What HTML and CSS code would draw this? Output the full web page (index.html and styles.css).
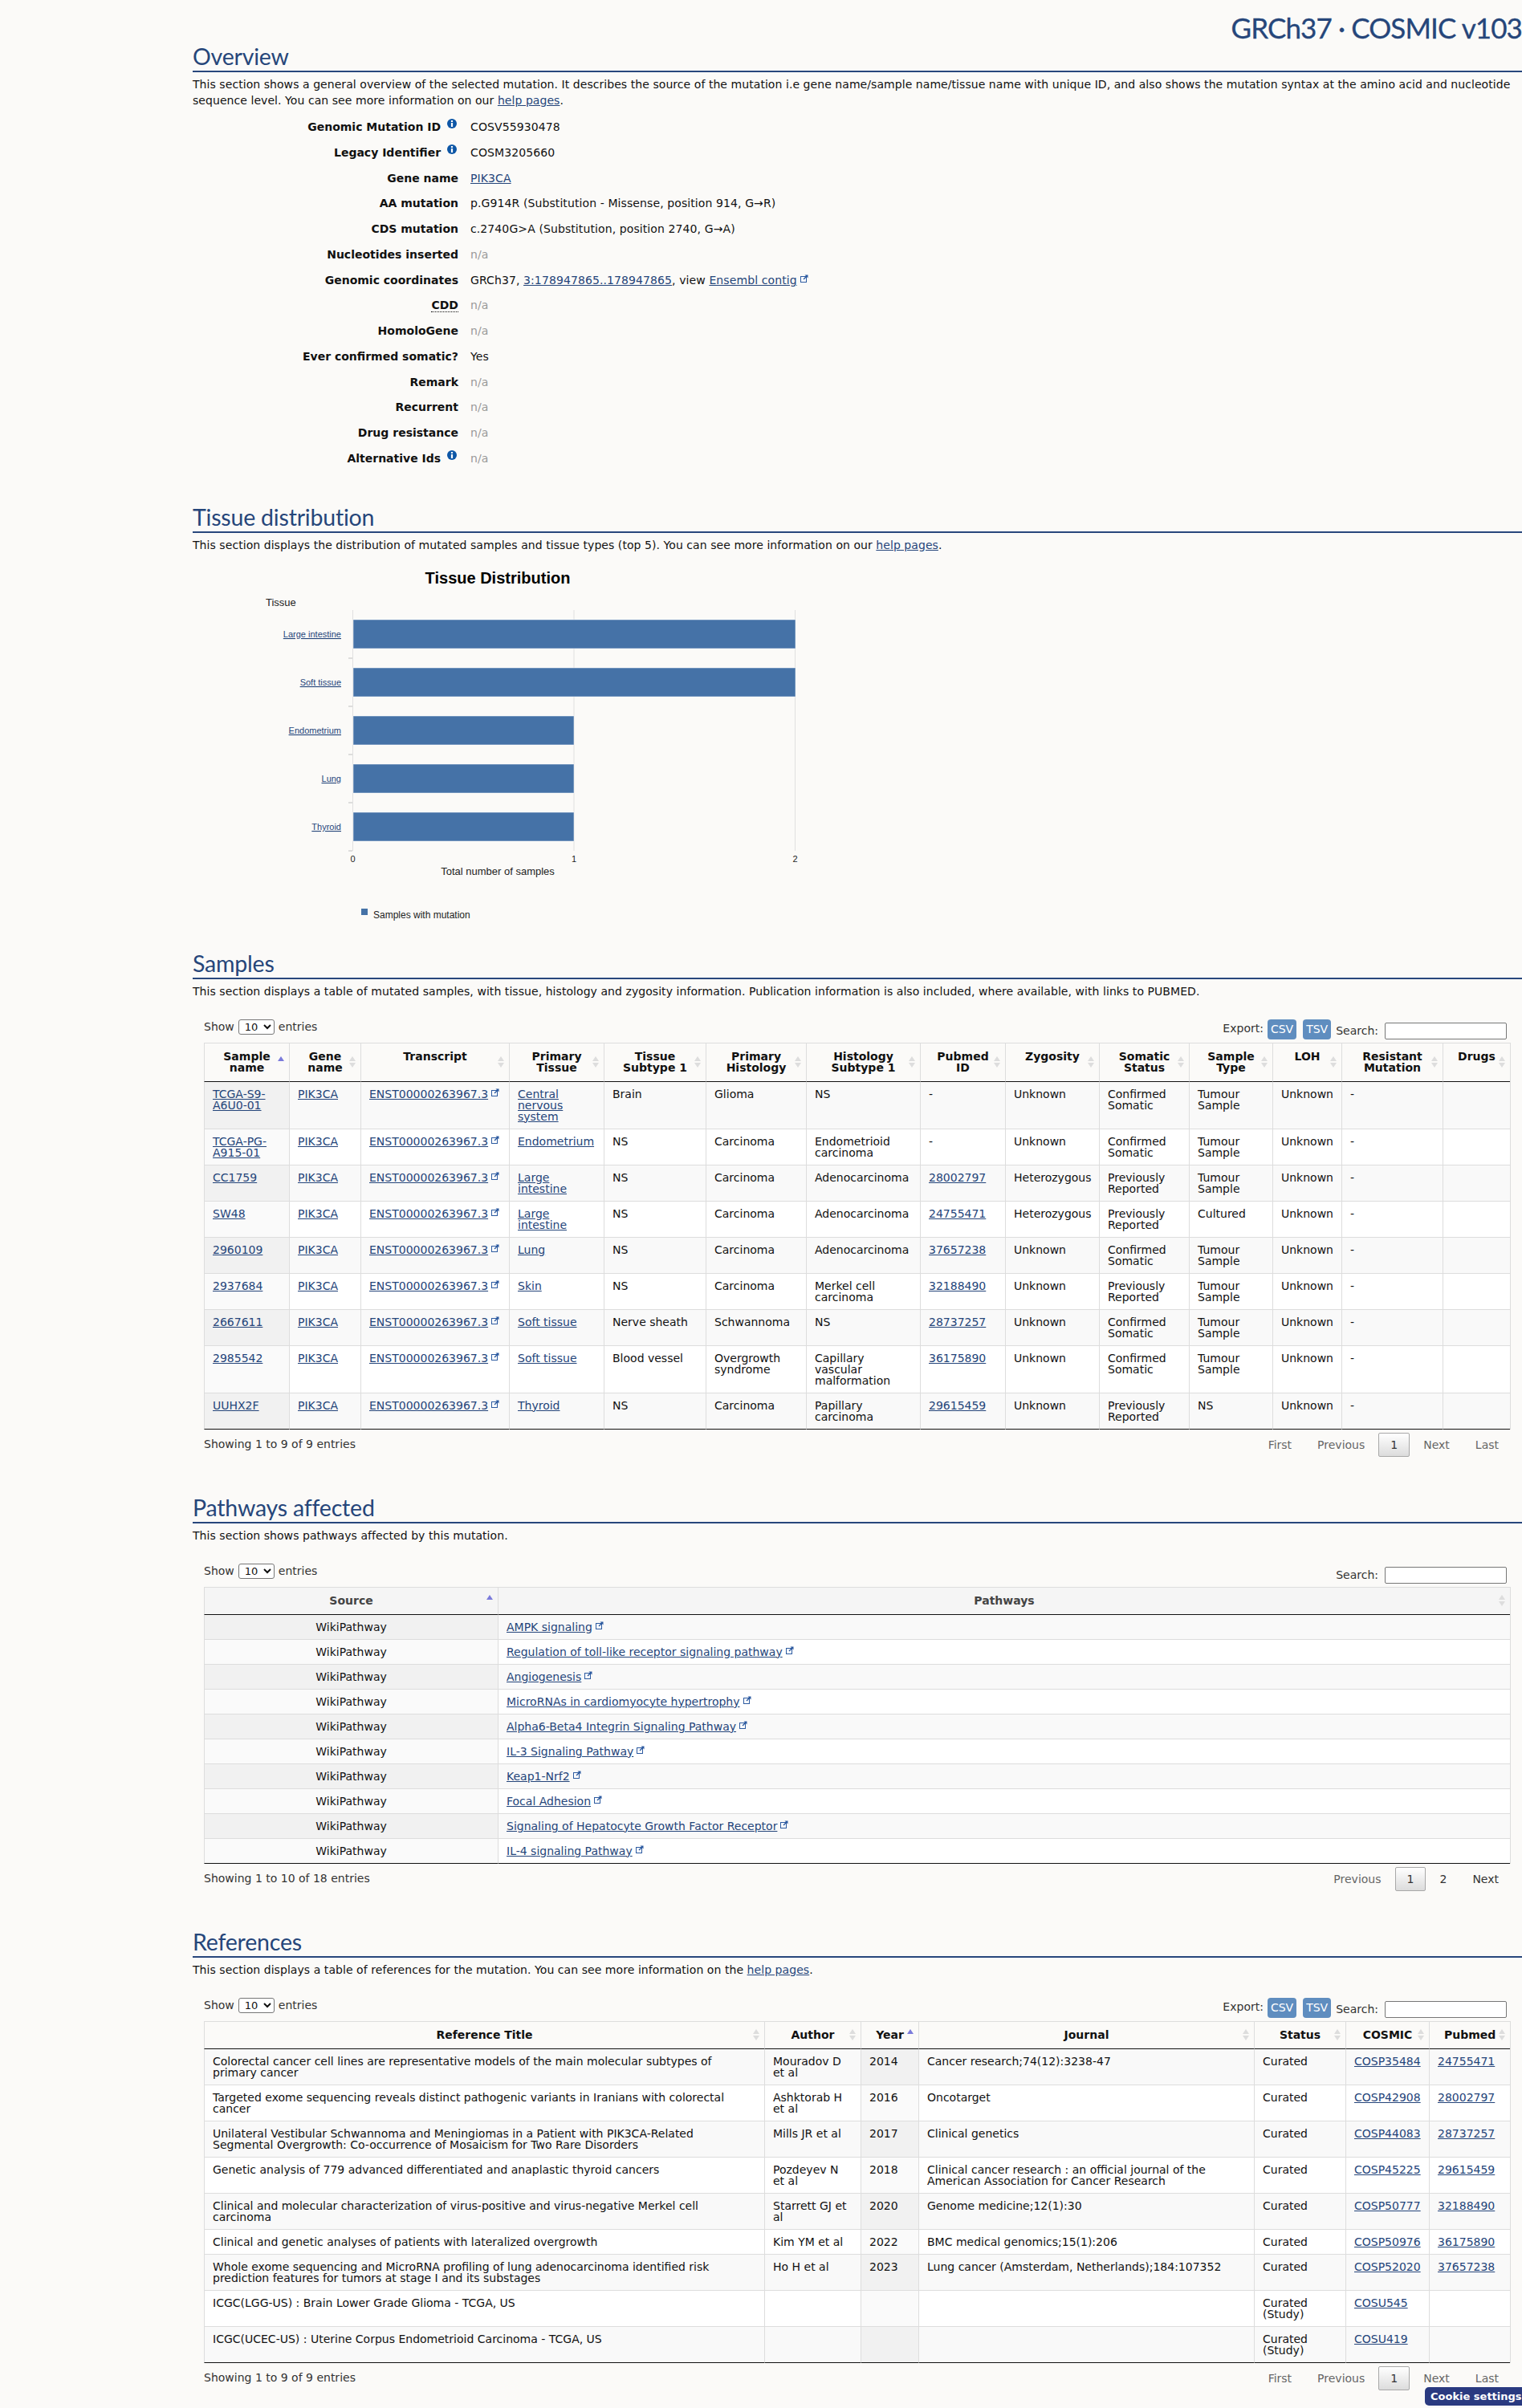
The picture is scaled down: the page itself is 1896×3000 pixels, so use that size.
FILE: index.html
```html
<!DOCTYPE html>
<html lang="en">
<head>
<meta charset="utf-8">
<title>GRCh37 · COSMIC v103</title>
<link rel="stylesheet" href="styles.css">
</head>
<body>
<svg class="defs" width="0" height="0" aria-hidden="true">
  <symbol id="ext" viewBox="0 0 10 10">
    <rect x="0.5" y="2.5" width="7" height="7" fill="#fff" stroke="#2c5aa0" stroke-width="1"/>
    <path d="M4 6 L8.2 1.8" stroke="#2c5aa0" stroke-width="1.4" fill="none"/>
    <path d="M5.5 0.5 H9.5 V4.5 Z" fill="#2c5aa0"/>
  </symbol>
  <symbol id="info" viewBox="0 0 12 12">
    <circle cx="6" cy="6" r="6" fill="#0d56a6"/>
    <rect x="4.9" y="2" width="2.2" height="2" fill="#fff"/>
    <rect x="4.9" y="5" width="2.2" height="5" fill="#fff"/>
  </symbol>
</svg>
<main class="page">
  <div class="release">GRCh37 · COSMIC v103</div>

  <section>
    <h2>Overview</h2>
    <p class="intro">This section shows a general overview of the selected mutation. It describes the source of the mutation i.e gene name/sample name/tissue name with unique ID, and also shows the mutation syntax at the amino acid and nucleotide sequence level. You can see more information on our <a href="#">help pages</a>.</p>
    <dl class="facts">
      <dt>Genomic Mutation ID <svg class="i"><use href="#info"/></svg></dt><dd>COSV55930478</dd>
      <dt>Legacy Identifier <svg class="i"><use href="#info"/></svg></dt><dd>COSM3205660</dd>
      <dt>Gene name</dt><dd><a href="#">PIK3CA</a></dd>
      <dt>AA mutation</dt><dd>p.G914R (Substitution - Missense, position 914, G→R)</dd>
      <dt>CDS mutation</dt><dd>c.2740G&gt;A (Substitution, position 2740, G→A)</dd>
      <dt>Nucleotides inserted</dt><dd class="na">n/a</dd>
      <dt>Genomic coordinates</dt><dd>GRCh37, <a href="#">3:178947865..178947865</a>, view <a href="#">Ensembl contig</a><svg class="x"><use href="#ext"/></svg></dd>
      <dt><abbr>CDD</abbr></dt><dd class="na">n/a</dd>
      <dt>HomoloGene</dt><dd class="na">n/a</dd>
      <dt>Ever confirmed somatic?</dt><dd>Yes</dd>
      <dt>Remark</dt><dd class="na">n/a</dd>
      <dt>Recurrent</dt><dd class="na">n/a</dd>
      <dt>Drug resistance</dt><dd class="na">n/a</dd>
      <dt>Alternative Ids <svg class="i"><use href="#info"/></svg></dt><dd class="na">n/a</dd>
    </dl>
  </section>

  <section>
    <h2>Tissue distribution</h2>
    <p class="intro">This section displays the distribution of mutated samples and tissue types (top 5). You can see more information on our <a href="#">help pages</a>.</p>
    <svg class="chart" viewBox="240 689 800 493" width="800" height="493">
      <g class="grid">
        <path d="M439.5 760V1060M715 760V1060M990.5 760V1060"/>
        <path d="M434 820H439M434 880H439M434 940H439M434 1000H439M434 1060H439"/>
      </g>
      <g class="bars">
        <rect x="440" y="772" width="551" height="36"/>
        <rect x="440" y="832" width="551" height="36"/>
        <rect x="440" y="892" width="275" height="36"/>
        <rect x="440" y="952" width="275" height="36"/>
        <rect x="440" y="1012" width="275" height="36"/>
      </g>
      <text class="c-title" x="620" y="727">Tissue Distribution</text>
      <text class="c-label" x="331" y="755">Tissue</text>
      <g class="c-links">
        <text x="425" y="794">Large intestine</text>
        <text x="425" y="854">Soft tissue</text>
        <text x="425" y="914">Endometrium</text>
        <text x="425" y="974">Lung</text>
        <text x="425" y="1034">Thyroid</text>
      </g>
      <g class="c-tick">
        <text x="439.5" y="1074">0</text>
        <text x="715" y="1074">1</text>
        <text x="990.5" y="1074">2</text>
      </g>
      <text class="c-axis" x="620" y="1090">Total number of samples</text>
      <rect class="c-key" x="450" y="1132" width="8" height="8"/>
      <text class="c-text" x="465" y="1144">Samples with mutation</text>
    </svg>
  </section>

  <section>
    <h2>Samples</h2>
    <p class="intro">This section displays a table of mutated samples, with tissue, histology and zygosity information. Publication information is also included, where available, with links to PUBMED.</p>
    <div class="dt">
      <div class="bar">
        <label class="len">Show <select><option>10</option></select> entries</label>
        <div class="tools">
          <span class="exp">Export:</span><a class="btn">CSV</a><a class="btn">TSV</a>
          <label class="find">Search: <input type="text"></label>
        </div>
      </div>
      <table class="grid-table samples">
        <colgroup>
          <col class="s1"><col class="s2"><col class="s3"><col class="s4"><col class="s5"><col class="s6"><col class="s7"><col class="s8"><col class="s9"><col class="s10"><col class="s11"><col class="s12"><col class="s13"><col class="s14">
        </colgroup>
        <thead>
          <tr>
            <th class="asc">Sample<br>name</th><th>Gene<br>name</th><th>Transcript</th><th>Primary<br>Tissue</th><th>Tissue<br>Subtype 1</th><th>Primary<br>Histology</th><th>Histology<br>Subtype 1</th><th>Pubmed<br>ID</th><th>Zygosity</th><th>Somatic<br>Status</th><th>Sample<br>Type</th><th>LOH</th><th>Resistant<br>Mutation</th><th>Drugs</th>
          </tr>
        </thead>
        <tbody>
          <tr><td class="key"><a href="#">TCGA-S9-A6U0-01</a></td><td><a href="#">PIK3CA</a></td><td class="nw"><a href="#">ENST00000263967.3</a><svg class="x"><use href="#ext"/></svg></td><td><a href="#">Central nervous system</a></td><td>Brain</td><td>Glioma</td><td>NS</td><td>-</td><td>Unknown</td><td>Confirmed Somatic</td><td>Tumour Sample</td><td>Unknown</td><td>-</td><td></td></tr>
          <tr><td class="key"><a href="#">TCGA-PG-A915-01</a></td><td><a href="#">PIK3CA</a></td><td class="nw"><a href="#">ENST00000263967.3</a><svg class="x"><use href="#ext"/></svg></td><td><a href="#">Endometrium</a></td><td>NS</td><td>Carcinoma</td><td>Endometrioid carcinoma</td><td>-</td><td>Unknown</td><td>Confirmed Somatic</td><td>Tumour Sample</td><td>Unknown</td><td>-</td><td></td></tr>
          <tr><td class="key"><a href="#">CC1759</a></td><td><a href="#">PIK3CA</a></td><td class="nw"><a href="#">ENST00000263967.3</a><svg class="x"><use href="#ext"/></svg></td><td><a href="#">Large intestine</a></td><td>NS</td><td>Carcinoma</td><td>Adenocarcinoma</td><td><a href="#">28002797</a></td><td>Heterozygous</td><td>Previously Reported</td><td>Tumour Sample</td><td>Unknown</td><td>-</td><td></td></tr>
          <tr><td class="key"><a href="#">SW48</a></td><td><a href="#">PIK3CA</a></td><td class="nw"><a href="#">ENST00000263967.3</a><svg class="x"><use href="#ext"/></svg></td><td><a href="#">Large intestine</a></td><td>NS</td><td>Carcinoma</td><td>Adenocarcinoma</td><td><a href="#">24755471</a></td><td>Heterozygous</td><td>Previously Reported</td><td>Cultured</td><td>Unknown</td><td>-</td><td></td></tr>
          <tr><td class="key"><a href="#">2960109</a></td><td><a href="#">PIK3CA</a></td><td class="nw"><a href="#">ENST00000263967.3</a><svg class="x"><use href="#ext"/></svg></td><td><a href="#">Lung</a></td><td>NS</td><td>Carcinoma</td><td>Adenocarcinoma</td><td><a href="#">37657238</a></td><td>Unknown</td><td>Confirmed Somatic</td><td>Tumour Sample</td><td>Unknown</td><td>-</td><td></td></tr>
          <tr><td class="key"><a href="#">2937684</a></td><td><a href="#">PIK3CA</a></td><td class="nw"><a href="#">ENST00000263967.3</a><svg class="x"><use href="#ext"/></svg></td><td><a href="#">Skin</a></td><td>NS</td><td>Carcinoma</td><td>Merkel cell carcinoma</td><td><a href="#">32188490</a></td><td>Unknown</td><td>Previously Reported</td><td>Tumour Sample</td><td>Unknown</td><td>-</td><td></td></tr>
          <tr><td class="key"><a href="#">2667611</a></td><td><a href="#">PIK3CA</a></td><td class="nw"><a href="#">ENST00000263967.3</a><svg class="x"><use href="#ext"/></svg></td><td><a href="#">Soft tissue</a></td><td>Nerve sheath</td><td>Schwannoma</td><td>NS</td><td><a href="#">28737257</a></td><td>Unknown</td><td>Confirmed Somatic</td><td>Tumour Sample</td><td>Unknown</td><td>-</td><td></td></tr>
          <tr><td class="key"><a href="#">2985542</a></td><td><a href="#">PIK3CA</a></td><td class="nw"><a href="#">ENST00000263967.3</a><svg class="x"><use href="#ext"/></svg></td><td><a href="#">Soft tissue</a></td><td>Blood vessel</td><td>Overgrowth syndrome</td><td>Capillary vascular malformation</td><td><a href="#">36175890</a></td><td>Unknown</td><td>Confirmed Somatic</td><td>Tumour Sample</td><td>Unknown</td><td>-</td><td></td></tr>
          <tr><td class="key"><a href="#">UUHX2F</a></td><td><a href="#">PIK3CA</a></td><td class="nw"><a href="#">ENST00000263967.3</a><svg class="x"><use href="#ext"/></svg></td><td><a href="#">Thyroid</a></td><td>NS</td><td>Carcinoma</td><td>Papillary carcinoma</td><td><a href="#">29615459</a></td><td>Unknown</td><td>Previously Reported</td><td>NS</td><td>Unknown</td><td>-</td><td></td></tr>
        </tbody>
      </table>
      <div class="foot">
        <div class="count">Showing 1 to 9 of 9 entries</div>
        <div class="pager"><span class="off">First</span><span class="off">Previous</span><span class="cur">1</span><span class="off">Next</span><span class="off">Last</span></div>
      </div>
    </div>
  </section>

  <section>
    <h2>Pathways affected</h2>
    <p class="intro">This section shows pathways affected by this mutation.</p>
    <div class="dt">
      <div class="bar">
        <label class="len">Show <select><option>10</option></select> entries</label>
        <div class="tools"><label class="find">Search: <input type="text"></label></div>
      </div>
      <table class="grid-table pathways">
        <colgroup><col class="p1"><col class="p2"></colgroup>
        <thead><tr><th class="asc">Source</th><th>Pathways</th></tr></thead>
        <tbody>
          <tr><td class="key mid">WikiPathway</td><td><a href="#">AMPK signaling</a><svg class="x"><use href="#ext"/></svg></td></tr>
          <tr><td class="key mid">WikiPathway</td><td><a href="#">Regulation of toll-like receptor signaling pathway</a><svg class="x"><use href="#ext"/></svg></td></tr>
          <tr><td class="key mid">WikiPathway</td><td><a href="#">Angiogenesis</a><svg class="x"><use href="#ext"/></svg></td></tr>
          <tr><td class="key mid">WikiPathway</td><td><a href="#">MicroRNAs in cardiomyocyte hypertrophy</a><svg class="x"><use href="#ext"/></svg></td></tr>
          <tr><td class="key mid">WikiPathway</td><td><a href="#">Alpha6-Beta4 Integrin Signaling Pathway</a><svg class="x"><use href="#ext"/></svg></td></tr>
          <tr><td class="key mid">WikiPathway</td><td><a href="#">IL-3 Signaling Pathway</a><svg class="x"><use href="#ext"/></svg></td></tr>
          <tr><td class="key mid">WikiPathway</td><td><a href="#">Keap1-Nrf2</a><svg class="x"><use href="#ext"/></svg></td></tr>
          <tr><td class="key mid">WikiPathway</td><td><a href="#">Focal Adhesion</a><svg class="x"><use href="#ext"/></svg></td></tr>
          <tr><td class="key mid">WikiPathway</td><td><a href="#">Signaling of Hepatocyte Growth Factor Receptor</a><svg class="x"><use href="#ext"/></svg></td></tr>
          <tr><td class="key mid">WikiPathway</td><td><a href="#">IL-4 signaling Pathway</a><svg class="x"><use href="#ext"/></svg></td></tr>
        </tbody>
      </table>
      <div class="foot">
        <div class="count">Showing 1 to 10 of 18 entries</div>
        <div class="pager"><span class="off">Previous</span><span class="cur">1</span><span>2</span><span>Next</span></div>
      </div>
    </div>
  </section>

  <section>
    <h2>References</h2>
    <p class="intro">This section displays a table of references for the mutation. You can see more information on the <a href="#">help pages</a>.</p>
    <div class="dt">
      <div class="bar">
        <label class="len">Show <select><option>10</option></select> entries</label>
        <div class="tools">
          <span class="exp">Export:</span><a class="btn">CSV</a><a class="btn">TSV</a>
          <label class="find">Search: <input type="text"></label>
        </div>
      </div>
      <table class="grid-table refs">
        <colgroup><col class="r1"><col class="r2"><col class="r3"><col class="r4"><col class="r5"><col class="r6"><col class="r7"></colgroup>
        <thead><tr><th>Reference Title</th><th>Author</th><th class="asc">Year</th><th>Journal</th><th>Status</th><th>COSMIC</th><th>Pubmed</th></tr></thead>
        <tbody>
          <tr><td>Colorectal cancer cell lines are representative models of the main molecular subtypes of primary cancer</td><td>Mouradov D et al</td><td class="key">2014</td><td>Cancer research;74(12):3238-47</td><td>Curated</td><td><a href="#">COSP35484</a></td><td><a href="#">24755471</a></td></tr>
          <tr><td>Targeted exome sequencing reveals distinct pathogenic variants in Iranians with colorectal cancer</td><td>Ashktorab H et al</td><td class="key">2016</td><td>Oncotarget</td><td>Curated</td><td><a href="#">COSP42908</a></td><td><a href="#">28002797</a></td></tr>
          <tr><td>Unilateral Vestibular Schwannoma and Meningiomas in a Patient with PIK3CA-Related Segmental Overgrowth: Co-occurrence of Mosaicism for Two Rare Disorders</td><td>Mills JR et al</td><td class="key">2017</td><td>Clinical genetics</td><td>Curated</td><td><a href="#">COSP44083</a></td><td><a href="#">28737257</a></td></tr>
          <tr><td>Genetic analysis of 779 advanced differentiated and anaplastic thyroid cancers</td><td>Pozdeyev N et al</td><td class="key">2018</td><td>Clinical cancer research : an official journal of the American Association for Cancer Research</td><td>Curated</td><td><a href="#">COSP45225</a></td><td><a href="#">29615459</a></td></tr>
          <tr><td>Clinical and molecular characterization of virus-positive and virus-negative Merkel cell carcinoma</td><td>Starrett GJ et al</td><td class="key">2020</td><td>Genome medicine;12(1):30</td><td>Curated</td><td><a href="#">COSP50777</a></td><td><a href="#">32188490</a></td></tr>
          <tr><td>Clinical and genetic analyses of patients with lateralized overgrowth</td><td>Kim YM et al</td><td class="key">2022</td><td>BMC medical genomics;15(1):206</td><td>Curated</td><td><a href="#">COSP50976</a></td><td><a href="#">36175890</a></td></tr>
          <tr><td>Whole exome sequencing and MicroRNA profiling of lung adenocarcinoma identified risk prediction features for tumors at stage I and its substages</td><td>Ho H et al</td><td class="key">2023</td><td>Lung cancer (Amsterdam, Netherlands);184:107352</td><td>Curated</td><td><a href="#">COSP52020</a></td><td><a href="#">37657238</a></td></tr>
          <tr><td>ICGC(LGG-US) : Brain Lower Grade Glioma - TCGA, US</td><td></td><td class="key"></td><td></td><td>Curated (Study)</td><td><a href="#">COSU545</a></td><td></td></tr>
          <tr><td>ICGC(UCEC-US) : Uterine Corpus Endometrioid Carcinoma - TCGA, US</td><td></td><td class="key"></td><td></td><td>Curated (Study)</td><td><a href="#">COSU419</a></td><td></td></tr>
        </tbody>
      </table>
      <div class="foot last">
        <div class="count">Showing 1 to 9 of 9 entries</div>
        <div class="pager"><span class="off">First</span><span class="off">Previous</span><span class="cur">1</span><span class="off">Next</span><span class="off">Last</span></div>
      </div>
    </div>
  </section>
</main>
<button class="cookie" type="button">Cookie settings</button>
</body>
</html>
```

FILE: styles.css
```css
* { box-sizing: border-box; }
html, body { margin: 0; padding: 0; }
body {
  background: #fbfaf8;
  color: #111;
  font: 14px/14px "DejaVu Sans", Verdana, sans-serif;
  overflow-x: hidden;
}
a { color: #25457a; text-decoration: underline; }
.defs { position: absolute; }

.page { padding-left: 240px; }
.release {
  height: 52px;
  padding-top: 16px;
  text-align: right;
  font: 400 35px/36px Lato, sans-serif;
  letter-spacing: -0.9px;
  -webkit-text-stroke: 0.3px #26467a;
  color: #26467a;
  white-space: nowrap;
}
h2 {
  margin: 0;
  height: 38px;
  border-bottom: 2px solid #28477c;
  font: 400 28.5px/36px Lato, sans-serif;
  letter-spacing: -0.2px;
  color: #26467a;
}
.intro { margin: 5px 0 0; line-height: 20px; max-width: 1650px; letter-spacing: 0.06px; }

.facts {
  display: grid;
  grid-template-columns: 331px 1fr;
  column-gap: 15px;
  grid-auto-rows: 31.77px;
  margin: 8px 0 0;
  line-height: 31px;
  padding-bottom: 38px;
}
.facts dt { font-weight: 700; text-align: right; white-space: nowrap; }
.facts dd { margin: 0; letter-spacing: 0.1px; }
.facts .na { color: #999; }
abbr { border-bottom: 1px dotted #111; }
.i { width: 12px; height: 12px; margin-left: 3px; margin-right: 2px; vertical-align: 3px; }
.x { width: 10px; height: 10px; margin: -2px 0 0 4px; vertical-align: 2px; }

.chart { display: block; }
.grid path { stroke: #e0e0e0; stroke-width: 1; fill: none; }
.grid path + path { stroke: #c0c0c0; }
.bars rect { fill: #4572a7; stroke: #fff; stroke-opacity: .5; }
.chart text { font-family: "Liberation Sans", Arial, sans-serif; fill: #222; }
.c-title { font-size: 20px; font-weight: 700; text-anchor: middle; fill: #000 !important; }
.c-text { font-size: 12px; }
.c-label { font-size: 13px; }
.c-axis { font-size: 13px; text-anchor: middle; }
.c-tick text { font-size: 11px; text-anchor: middle; }
.c-links text { font-size: 11px; text-anchor: end; fill: #25457a; text-decoration: underline; }
.c-key { fill: #4572a7; }

.dt { margin-left: 14px; width: 1627px; }
.bar {
  display: flex;
  justify-content: space-between;
  align-items: flex-start;
  height: 54px;
  padding: 25px 4px 0 0;
  color: #333;
}
.len { display: flex; align-items: center; gap: 5px; height: 19px; }
select {
  width: 45px;
  height: 19px;
  padding: 0 0 0 3px;
  font: 13px "DejaVu Sans", sans-serif;
  background: #fff;
  color: #111;
  border: 1px solid #777;
  border-radius: 3px;
}
.tools { display: flex; align-items: flex-start; }
.exp { padding-top: 4px; margin-right: 5px; }
.btn {
  display: block;
  height: 25px;
  margin-right: 8px;
  padding: 0 4px;
  background: #5f8dbf;
  color: #fff;
  line-height: 25px;
  border-radius: 4px;
  text-decoration: none;
}
.btn + .btn { margin-right: 6px; }
.find { display: flex; align-items: flex-start; gap: 8px; line-height: 28px; }
input {
  display: block;
  width: 152px;
  height: 21px;
  margin-top: 4px;
  background: #fff;
  border: 1px solid #777;
  border-radius: 2px;
}

.grid-table {
  width: 1627px;
  table-layout: fixed;
  border-collapse: separate;
  border-spacing: 0;
  border-top: 1px solid #ddd;
  border-right: 1px solid #ddd;
}
th, td { border-left: 1px solid #ddd; }
th {
  position: relative;
  padding: 9px 18px 10px;
  border-bottom: 1px solid #111;
  font-weight: 700;
  text-align: center;
  vertical-align: top;
  white-space: nowrap;
}
th::before, th::after {
  content: "";
  position: absolute;
  right: 6px;
  top: 50%;
  border-left: 4px solid transparent;
  border-right: 4px solid transparent;
}
th::before { margin-top: -7px; border-bottom: 6px solid #ddd; }
th::after { margin-top: 1px; border-top: 6px solid #ddd; }
th.asc::before { border-bottom-color: #7b7bdb; }
th.asc::after { display: none; }
td {
  padding: 8px 10px;
  vertical-align: top;
  border-bottom: 1px solid #ddd;
}
tbody tr:nth-child(odd) td { background: #f9f9f9; }
tbody tr:nth-child(even) td { background: #fff; }
tbody tr:nth-child(odd) td.key { background: #f1f1f1; }
tbody tr:nth-child(even) td.key { background: #fafafa; }
tbody tr:last-child td { border-bottom-color: #111; }
.nw { white-space: nowrap; }
.mid { text-align: center; }
.pathways th { background: #f5f5f5; color: #444; }

.s1 { width: 106px; } .s2 { width: 89px; } .s3 { width: 185px; } .s4 { width: 118px; }
.s5 { width: 127px; } .s6 { width: 125px; } .s7 { width: 142px; } .s8 { width: 106px; }
.s9 { width: 117px; } .s10 { width: 112px; } .s11 { width: 104px; } .s12 { width: 86px; }
.s13 { width: 126px; } .s14 { width: 84px; }
.p1 { width: 366px; } .p2 { width: 1261px; }
.r1 { width: 698px; } .r2 { width: 120px; } .r3 { width: 72px; } .r4 { width: 418px; }
.r5 { width: 114px; } .r6 { width: 104px; } .r7 { width: 101px; }

.foot {
  display: flex;
  justify-content: space-between;
  align-items: flex-start;
  height: 79px;
  padding-top: 4px;
  color: #333;
}
.foot.last { height: 57px; }
.count { padding-top: 7px; }
.pager { display: flex; gap: 2px; margin-right: -1px; }
.pager span {
  display: block;
  height: 30px;
  padding: 7px 14px;
  border: 1px solid transparent;
  border-radius: 2px;
}
.pager .off { color: #666; }
.pager .cur {
  color: #333;
  border-color: #a8a8a8;
  background: linear-gradient(#fff, #dcdcdc);
}

.cookie {
  position: fixed;
  right: 0;
  bottom: 3px;
  width: 121px;
  height: 23px;
  padding: 0 0 0 7px;
  overflow: hidden;
  text-align: left;
  white-space: nowrap;
  background: #2a3a80;
  color: #fff;
  border: 0;
  border-radius: 5px 0 0 5px;
  font: 700 13px "DejaVu Sans", sans-serif;
}
```
